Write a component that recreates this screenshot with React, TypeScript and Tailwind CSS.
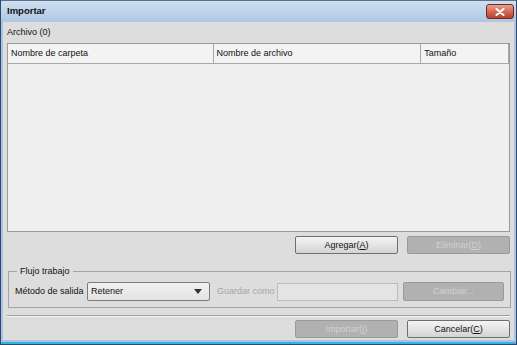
import React from "react"

const font = { fontFamily: '"Liberation Sans", Arial, sans-serif' }

function Btn({ label, k, disabled }: { label: string; k: string; disabled?: boolean }) {
    return (
        <div
            className={
                "w-[103px] h-[18px] rounded-[2px] border flex items-center justify-center text-[9px] leading-none " +
                (disabled
                    ? "border-[#9a9a9a] bg-[#b1b1b1] text-[#d2d2d2]"
                    : "border-[#6f6f6f] bg-gradient-to-b from-[#f4f4f4] to-[#d4d4d4] text-[#111]")
            }
        >
            {label}(<u>{k}</u>)
        </div>
    )
}

export default function App() {
    return (
        <div style={font} className="w-[517px] h-[345px] flex flex-col bg-[#2d4a6c] p-[1px] pt-0 text-[#111]">
            {/* title bar */}
            <div className="h-[22px] shrink-0 flex items-center justify-between pl-[6px] pr-[2px] bg-gradient-to-b from-[#cfdff1] to-[#afc7e4] border-t border-[#5a7290]">
                <span className="text-[9.5px] font-bold text-[#111]">Importar</span>
                <div className="w-[28px] h-[15px] rounded-[3px] border border-[#6e2a22] bg-gradient-to-b from-[#e7a391] via-[#d26a55] to-[#b8402e] flex items-center justify-center">
                    <svg width="10" height="8" viewBox="0 0 10 8">
                        <path d="M1.5 1 L8.5 7 M8.5 1 L1.5 7" stroke="#fff" strokeWidth="2" strokeLinecap="round" />
                    </svg>
                </div>
            </div>

            {/* body */}
            <div className="flex-1 flex flex-col bg-[#a9c4e2] px-[2px] pb-[2px] border-b-2 border-[#32b3e3]">
                <div className="flex-1 flex flex-col bg-[#dddddd] px-[4px]">
                    <div className="pt-[5px] h-[16px] text-[9px] leading-[11px]">Archivo (0)</div>

                    {/* table */}
                    <div className="mt-[5px] h-[189px] flex flex-col border border-[#9a9a9a] bg-[#efefef]">
                        <div className="h-[20px] flex bg-[#f3f3f3] border-b border-[#a8a8a8] text-[9px]">
                            <div className="w-[206px] px-[3px] flex items-center border-r border-[#a8a8a8]">Nombre de carpeta</div>
                            <div className="w-[208px] px-[3px] flex items-center border-r border-[#a8a8a8]">Nombre de archivo</div>
                            <div className="w-[88px] px-[3px] flex items-center border-r border-[#a8a8a8]">Tamaño</div>
                            <div className="flex-1" />
                        </div>
                        <div className="flex-1" />
                    </div>

                    <div className="mt-[4px] flex justify-end gap-[9px]">
                        <Btn label="Agregar" k="A" />
                        <Btn label="Eliminar" k="D" disabled />
                    </div>

                    {/* fieldset */}
                    <fieldset className="mt-[12px] ml-[1px] mr-[2px] border border-[#a3a3a3] px-[6px] pt-[5px] pb-[6px]">
                        <legend className="ml-[2px] px-[3px] text-[9px] leading-[11px]">Flujo trabajo</legend>
                        <div className="flex items-center h-[19px] text-[9px]">
                            <span className="w-[72px]">Método de salida</span>
                            <div className="w-[123px] h-[19px] rounded-[2px] border border-[#7a7a7a] bg-gradient-to-b from-[#f1f1f1] to-[#e3e3e3] flex items-center justify-between pl-[3px] pr-[7px]">
                                <span>Retener</span>
                                <svg width="8" height="5" viewBox="0 0 8 5">
                                    <path d="M0 0 L8 0 L4 5 Z" fill="#333" />
                                </svg>
                            </div>
                            <span className="ml-[7px] w-[60px] text-[#a6a6a6]">Guardar como</span>
                            <div className="w-[121px] h-[18px] border border-[#bcbcbc] bg-[#e4e4e4]" />
                            <div className="ml-[5px] w-[101px] h-[19px] rounded-[2px] border border-[#9a9a9a] bg-[#b1b1b1] text-[#d2d2d2] flex items-center justify-center">
                                Cambiar...
                            </div>
                        </div>
                    </fieldset>

                    <div className="mt-[7px] h-[2px] border-t border-[#a0a0a0] border-b border-b-[#f6f6f6]" />

                    <div className="mt-[3px] flex justify-end gap-[9px]">
                        <Btn label="Importar" k="I" disabled />
                        <Btn label="Cancelar" k="C" />
                    </div>
                </div>
            </div>
        </div>
    )
}
